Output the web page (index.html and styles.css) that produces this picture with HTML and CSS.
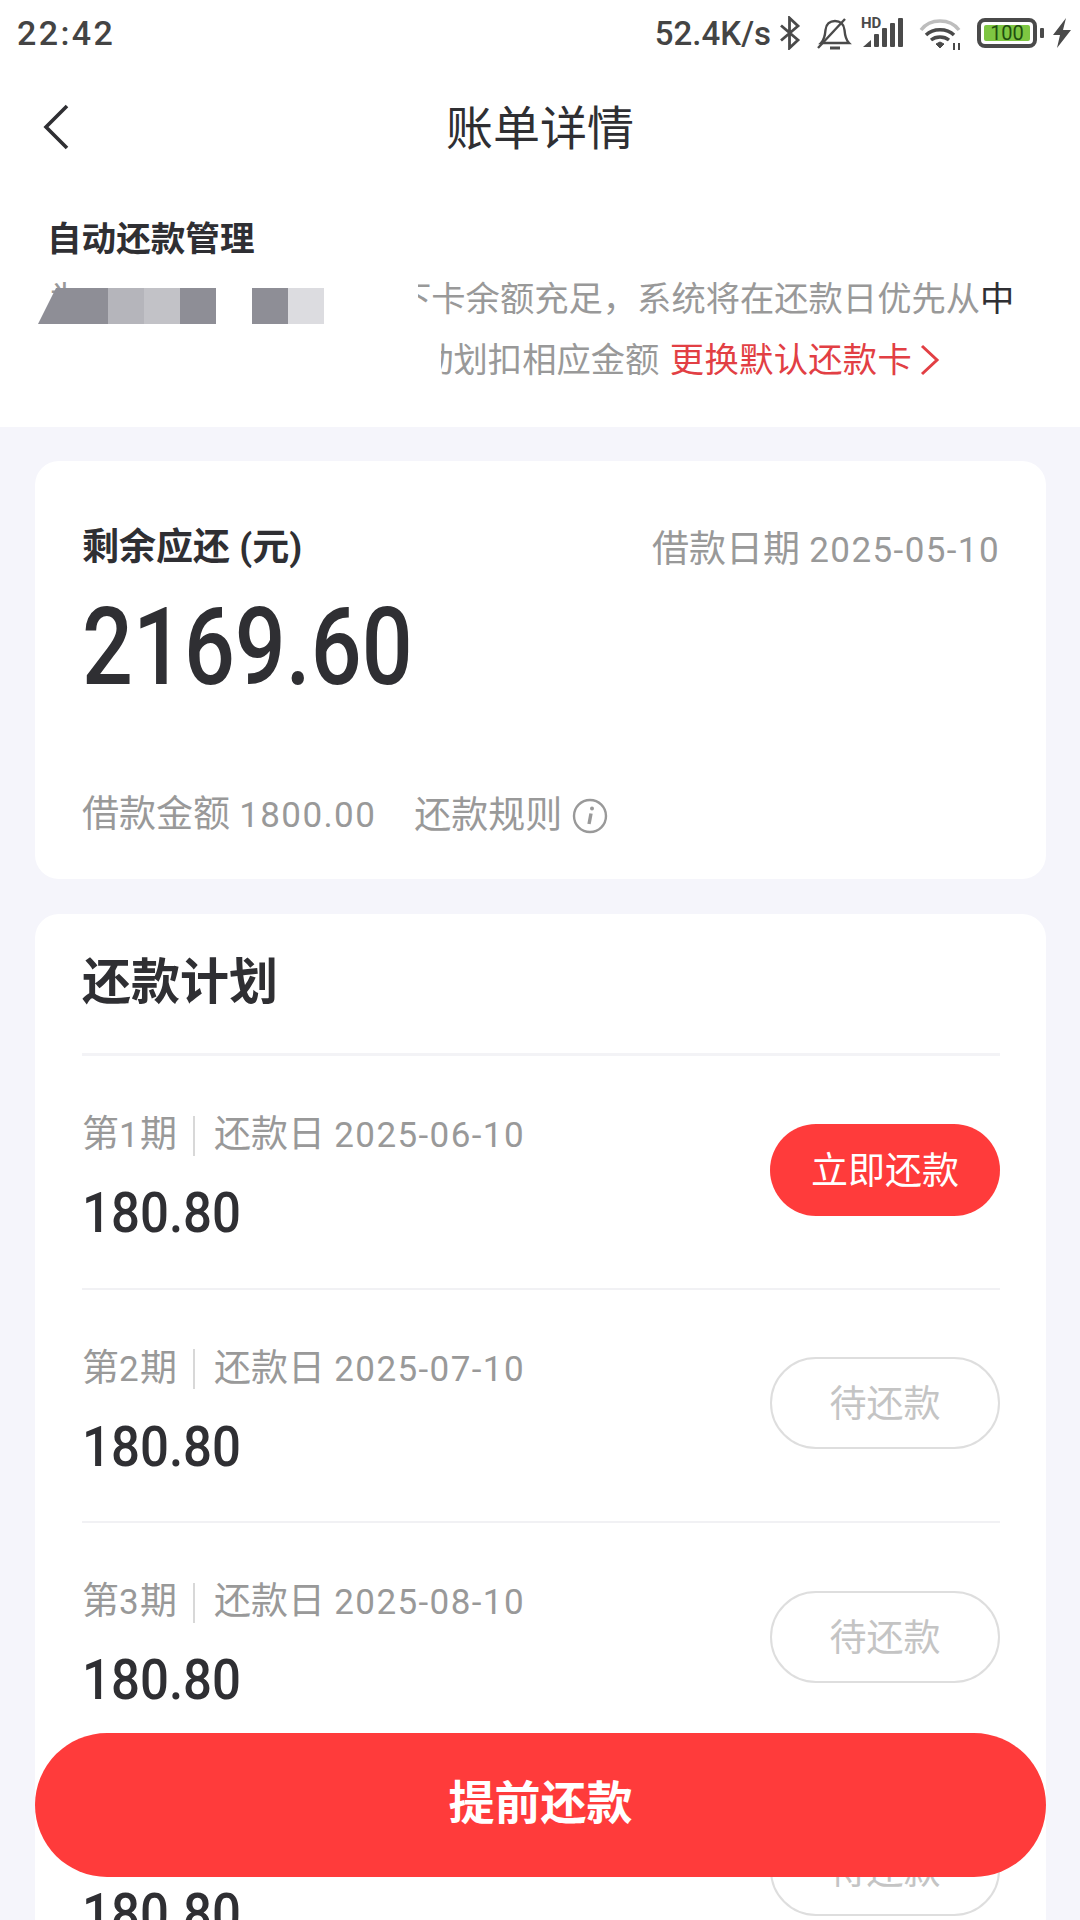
FILE: index.html
```html
<!DOCTYPE html>
<html lang="en">
<head>
    <title>账单详情</title>
    <link rel="stylesheet" href="styles.css">
</head>
<body>
    <div class="screen">
        <div class="status-bar">
            <span class="status-time">22:42</span>
            <div class="status-right">
                <span class="status-speed">52.4K/s</span>
                <svg class="icon-bt" width="22" height="34" viewBox="0 0 22 34" fill="none" stroke="#4a4a4a" stroke-width="2.8"><path d="M2 9.500 L19 24 L10.500 32 V2 L19 10 L2 24.500"/></svg>
                <svg class="icon-bell" width="36" height="36" viewBox="0 0 36 36" fill="none" stroke="#4a4a4a" stroke-width="2.4"><path d="M5 28 H33 C30 25 29 21 28.500 15 C28 9 24 6 19 6 C14 6 10 9 9.500 15 C9 21 8 25 5 28 Z"/><path d="M2 33 L29 4"/><path d="M14 33 H24" stroke-width="3"/></svg>
                <div class="signal">
                    <span class="signal-hd">HD</span>
                    <svg width="42" height="30" viewBox="0 0 42 30" fill="#4a4a4a"><path d="M2 29 L10 22 V29 Z"/><rect x="13" y="16" width="5" height="13" rx="1"/><rect x="21" y="10" width="5" height="19" rx="1"/><rect x="29" y="5" width="5" height="24" rx="1"/><rect x="37" y="0" width="5" height="29" rx="1"/></svg>
                </div>
                <svg class="icon-wifi" width="44" height="34" viewBox="0 0 44 34" fill="none" stroke-width="3.4"><path d="M3 14 C12 2 32 2 41 14" stroke="#bdbdbd"/><path d="M8 19 C15 12 29 12 36 19" stroke="#4a4a4a"/><path d="M13 24 C18 20 26 20 31 24" stroke="#4a4a4a"/><path d="M18 28 L22 32 L26 28 L22 26 Z" fill="#4a4a4a" stroke="#4a4a4a" stroke-width="1"/><path d="M36 34 V27 M41 34 V27" stroke="#4a4a4a" stroke-width="2"/></svg>
                <div class="battery">
                    <div class="battery-body"><span class="battery-level">100</span></div>
                    <span class="battery-tip"></span>
                </div>
                <svg class="icon-bolt" width="20" height="30" viewBox="0 0 20 30" fill="#4a4a4a"><path d="M14 0 L1 17 H8 L5 30 L19 12 H11 Z"/></svg>
            </div>
        </div>

        <div class="nav-bar">
            <svg class="nav-back" width="26" height="46" viewBox="0 0 26 46" fill="none" stroke="#2f2f33" stroke-width="3.6"><path d="M24 2 L3 23 L24 44"/></svg>
            <h1 class="nav-title">账单详情</h1>
        </div>

        <div class="auto-pay">
            <h2 class="auto-title">自动还款管理</h2>
            <div class="auto-line">
                <span class="auto-first">为</span>
                <span class="auto-clip auto-clip--one">下卡余额充足，系统将在还款日优先从<b class="auto-dark">中</b></span>
            </div>
            <div class="auto-line">
                <span class="auto-first"></span>
                <span class="auto-clip auto-clip--two">动划扣相应金额 <a class="auto-link">更换默认还款卡<svg class="auto-chevron" width="20" height="32" viewBox="0 0 20 32" fill="none" stroke="#e23f44" stroke-width="3"><path d="M2 2 L17 16 L2 30"/></svg></a></span>
            </div>
            <div class="mosaic">
                <i class="mosaic-cell mosaic-cell--start"></i>
                <i class="mosaic-cell mosaic-cell--mid"></i>
                <i class="mosaic-cell mosaic-cell--soft"></i>
                <i class="mosaic-cell mosaic-cell--dark"></i>
                <i class="mosaic-cell mosaic-cell--none"></i>
                <i class="mosaic-cell mosaic-cell--dark"></i>
                <i class="mosaic-cell mosaic-cell--pale"></i>
            </div>
        </div>

        <div class="content">
            <section class="card summary">
                <div class="summary-top">
                    <span class="summary-label">剩余应还 (元)</span>
                    <span class="summary-date muted">借款日期 <span class="num">2025-05-10</span></span>
                </div>
                <div class="summary-amount">2169.60</div>
                <div class="summary-foot muted">
                    <span>借款金额 <span class="num">1800.00</span></span>
                    <span class="summary-rule">还款规则
                        <svg width="36" height="36" viewBox="0 0 36 36" fill="none" stroke="#999"><circle cx="18" cy="18" r="16" stroke-width="2.4"/><path d="M19 15.500 L17 26" stroke-width="3.4"/><circle cx="20" cy="10.500" r="2" fill="#999" stroke="none"/></svg>
                    </span>
                </div>
            </section>

            <section class="card plan">
                <h2 class="plan-title">还款计划</h2>
                <div class="plan-row">
                    <div class="plan-info">
                        <div class="plan-meta muted"><span>第<span class="num">1</span>期</span><i class="plan-sep"></i><span>还款日 <span class="num">2025-06-10</span></span></div>
                        <div class="plan-amount">180.80</div>
                    </div>
                    <button class="btn btn--pay">立即还款</button>
                </div>
                <div class="plan-row">
                    <div class="plan-info">
                        <div class="plan-meta muted"><span>第<span class="num">2</span>期</span><i class="plan-sep"></i><span>还款日 <span class="num">2025-07-10</span></span></div>
                        <div class="plan-amount">180.80</div>
                    </div>
                    <button class="btn btn--wait">待还款</button>
                </div>
                <div class="plan-row">
                    <div class="plan-info">
                        <div class="plan-meta muted"><span>第<span class="num">3</span>期</span><i class="plan-sep"></i><span>还款日 <span class="num">2025-08-10</span></span></div>
                        <div class="plan-amount">180.80</div>
                    </div>
                    <button class="btn btn--wait">待还款</button>
                </div>
                <div class="plan-row">
                    <div class="plan-info">
                        <div class="plan-meta muted"><span>第<span class="num">4</span>期</span><i class="plan-sep"></i><span>还款日 <span class="num">2025-09-10</span></span></div>
                        <div class="plan-amount">180.80</div>
                    </div>
                    <button class="btn btn--wait">待还款</button>
                </div>
            </section>
        </div>

        <button class="prepay">提前还款</button>
    </div>
</body>
</html>
```

FILE: styles.css
```css
:root {
    --red: #ff3b3b;
    --ink: #2f2f33;
    --gray: #999999;
    --page: #f5f5fb;
}

html, body {
    margin: 0;
    padding: 0;
}

body {
    background: var(--page);
    color: var(--ink);
    font-family: Roboto, "Noto Sans CJK SC", sans-serif;
}

.screen {
    height: 1920px;
    overflow: hidden;
    position: relative;
    width: 1080px;
}

/* status bar */
.status-bar {
    align-items: center;
    background: #fff;
    box-sizing: border-box;
    display: flex;
    height: 66px;
    justify-content: space-between;
    padding: 0 8px 0 17px;
}

.status-time {
    color: #444;
    font-size: 34px;
    font-weight: 500;
    letter-spacing: 2.400px;
}

.status-right {
    align-items: center;
    display: flex;
}

.status-speed {
    color: #444;
    font-size: 33px;
    font-weight: 500;
    margin-right: 8px;
}

.icon-bell {
    margin-left: 15px;
}

.signal {
    height: 34px;
    margin-left: 9px;
    position: relative;
    width: 42px;
}

.signal svg {
    bottom: 2px;
    left: 0;
    position: absolute;
}

.signal-hd {
    color: #4a4a4a;
    font-size: 15px;
    font-weight: 700;
    left: 0;
    line-height: 13px;
    position: absolute;
    top: 1px;
}

.icon-wifi {
    margin-left: 15px;
}

.battery {
    align-items: center;
    display: flex;
    margin-left: 15px;
}

.battery-body {
    border: 4px solid #4a4a4a;
    border-radius: 8px;
    box-sizing: border-box;
    display: flex;
    height: 30px;
    padding: 3px;
    width: 60px;
}

.battery-level {
    background: #7ec642;
    border-radius: 2px;
    color: #1f4d10;
    flex-grow: 1;
    font-size: 20px;
    line-height: 16px;
    text-align: center;
}

.battery-tip {
    background: #4a4a4a;
    border-radius: 1px;
    height: 10px;
    margin-left: 3px;
    width: 4px;
}

.icon-bolt {
    margin-left: 8px;
}

/* nav */
.nav-bar {
    align-items: center;
    background: #fff;
    display: flex;
    height: 122px;
    justify-content: center;
    position: relative;
}

.nav-back {
    left: 43px;
    position: absolute;
    top: 38px;
}

.nav-title {
    font-size: 47px;
    font-weight: 400;
    margin: -6px 0 0;
}

/* auto repayment */
.auto-pay {
    background: #fff;
    box-sizing: border-box;
    height: 239px;
    padding: 30px 0 0 47px;
    position: relative;
}

.auto-title {
    font-size: 34.600px;
    font-weight: 700;
    line-height: 42px;
    margin: 0 0 9px;
}

.auto-line {
    color: var(--gray);
    display: flex;
    font-size: 34.300px;
    height: 61px;
    line-height: 60px;
    white-space: nowrap;
}

.auto-first {
    padding-left: 2px;
    width: 369px;
}

.auto-clip {
    display: block;
    overflow: hidden;
    width: 640px;
}

.auto-clip--one {
    text-indent: -21px;
}

.auto-clip--two {
    margin-left: 24px;
    text-indent: -22px;
}

.auto-dark {
    color: var(--ink);
    font-weight: 400;
}

.auto-link {
    color: #e23f44;
    letter-spacing: 0.300px;
    margin-left: 2px;
}

.auto-chevron {
    margin-left: 8px;
    vertical-align: -4px;
}

.mosaic {
    display: flex;
    left: 38px;
    position: absolute;
    top: 100px;
}

.mosaic-cell {
    display: block;
    height: 36px;
    width: 36px;
}

.mosaic-cell--start {
    background: #8e8e96;
    clip-path: polygon(18px 0, 100% 0, 100% 100%, 0 100%);
    width: 70px;
}

.mosaic-cell--mid {
    background: #b5b5bb;
}

.mosaic-cell--soft {
    background: #c2c2c7;
}

.mosaic-cell--dark {
    background: #8e8e96;
}

.mosaic-cell--none {
    background: #fff;
}

.mosaic-cell--pale {
    background: #dcdce0;
}

/* cards */
.content {
    padding: 34px 34px 0 35px;
}

.card {
    background: #fff;
    border-radius: 24px;
    box-sizing: border-box;
    padding: 0 46px 0 47px;
}

.muted {
    color: var(--gray);
    font-size: 37px;
}

.num {
    font-size: 35px;
    letter-spacing: 1.400px;
}

.summary {
    height: 418px;
    margin-bottom: 35px;
    padding-top: 60px;
}

.summary-top {
    align-items: center;
    display: flex;
    justify-content: space-between;
    line-height: 52px;
}

.summary-date {
    padding-top: 3px;
}

.summary-label {
    font-size: 37px;
    font-weight: 700;
    padding-bottom: 3px;
}

.summary-amount {
    font-size: 108px;
    font-weight: 500;
    line-height: 120px;
    margin-top: 10px;
    transform: scaleX(0.83);
    transform-origin: left center;
}

.summary-foot {
    align-items: center;
    display: flex;
    gap: 38px;
    line-height: 50px;
    margin-top: 83px;
}

.summary-rule {
    align-items: center;
    display: flex;
    gap: 10px;
}

.plan {
    padding-top: 0;
}

.plan-title {
    border-bottom: 3px solid #f3f3f6;
    font-size: 49px;
    font-weight: 700;
    height: 139px;
    line-height: 138px;
    margin: 0;
}

.plan-row {
    align-items: center;
    border-bottom: 2px solid #f1f1f4;
    box-sizing: border-box;
    display: flex;
    height: 233.500px;
    justify-content: space-between;
}

.plan-info {
    display: flex;
    flex-direction: column;
    padding-top: 12px;
}

.plan-meta {
    align-items: center;
    display: flex;
    line-height: 50px;
    padding-top: 1px;
}

.plan-sep {
    background: #d8d8d8;
    height: 40px;
    margin: 0 19px 0 16px;
    width: 2px;
}

.plan-amount {
    font-size: 56px;
    font-weight: 500;
    line-height: 66px;
    margin-top: 19px;
    transform: scaleX(0.91);
    transform-origin: left center;
}

.btn {
    border-radius: 46px;
    box-sizing: border-box;
    font-family: inherit;
    font-size: 37px;
    height: 92px;
    margin-bottom: 4px;
    padding: 0 0 4px;
    width: 230px;
}

.btn--pay {
    background: var(--red);
    border: none;
    color: #fff;
}

.btn--wait {
    background: #fff;
    border: 2px solid #dedede;
    color: #c4c4c4;
}

.prepay {
    background: var(--red);
    border: none;
    border-radius: 72px;
    bottom: 43px;
    color: #fff;
    font-family: inherit;
    font-size: 46px;
    font-weight: 700;
    height: 144px;
    left: 35px;
    padding: 0 0 12px;
    position: absolute;
    width: 1011px;
}
```
